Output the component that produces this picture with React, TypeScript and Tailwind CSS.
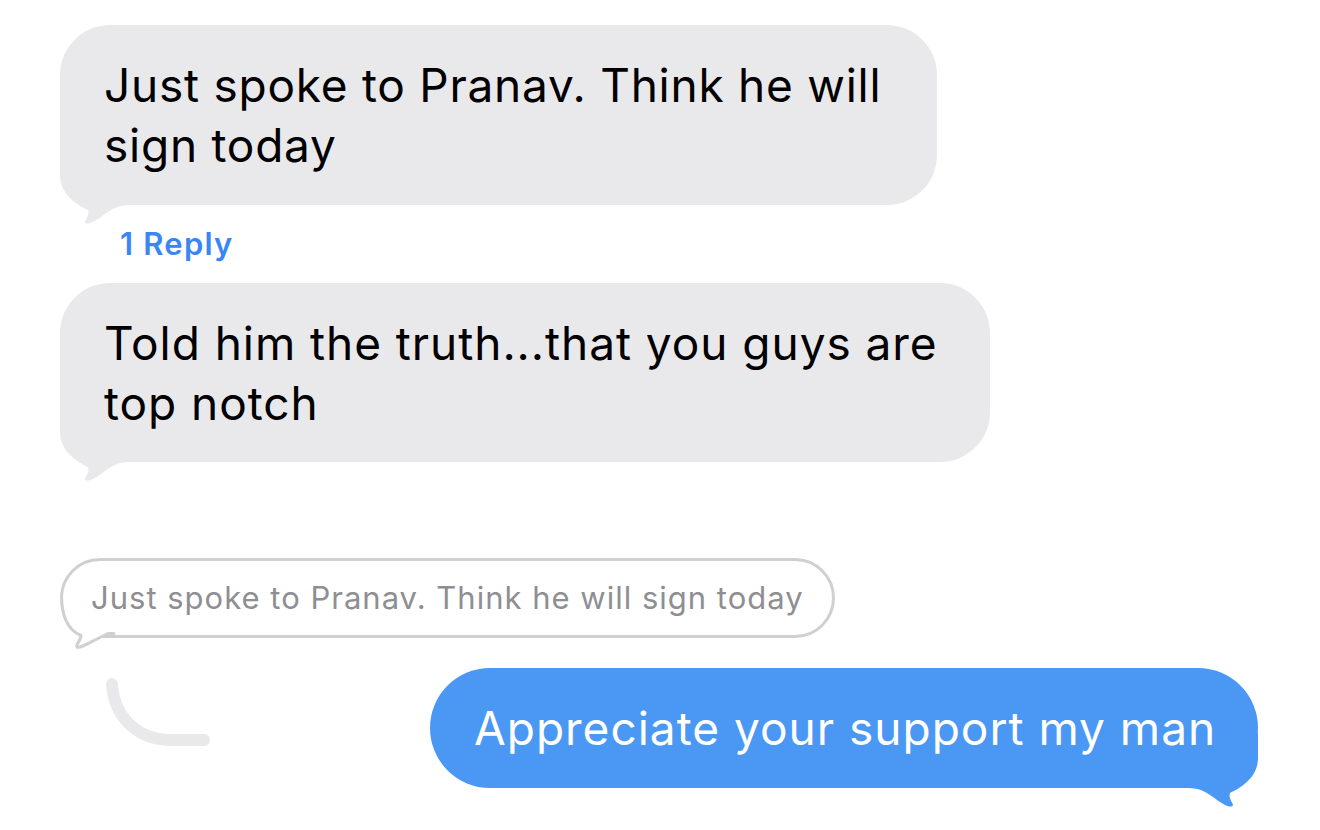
import React from 'react';

const gray = '#e9e9eb';

function GrayTail({ color }: { color: string }) {
  return (
    <svg width="70" height="80" viewBox="0 0 70 80" className="absolute left-0 bottom-[-25px]">
      <path
        d="M0 0 L0 25 C0 45 18 55 28 60 C30 65 25 70 25 72 C26 76 35 72 45 64 C52 59 58 55 70 55 L70 0 Z"
        fill={color}
      />
    </svg>
  );
}

function BlueTail({ color }: { color: string }) {
  return (
    <svg width="70" height="80" viewBox="0 0 70 80" className="absolute right-0 bottom-[-25px] -scale-x-100">
      <path
        d="M0 0 L0 25 C0 45 18 55 28 60 C30 65 25 70 25 72 C26 76 35 72 45 64 C52 59 58 55 70 55 L70 0 Z"
        fill={color}
      />
    </svg>
  );
}

function QuotedTail() {
  return (
    <svg width="60" height="60" viewBox="0 0 60 60" className="absolute left-[-3px] bottom-[-20px] overflow-visible">
      <path d="M0 0 C0 25 10 36 22 40.5 C22 46 16 50 18 52 C21 54 32 46 48 37 L60 37 L60 0 Z" fill="#fff" />
      <path
        d="M1.5 0 C1.5 25 10 36 21 40.5 C21 46 15 50 17 52 C20 54 32 46 48 38.5 L54 38.5"
        fill="none"
        stroke="#d0d0d0"
        strokeWidth="3"
        strokeLinejoin="round"
        strokeLinecap="round"
      />
    </svg>
  );
}

export default function App() {
  return (
    <div className="min-h-screen bg-white pt-[25px] font-['Inter','Liberation_Sans',sans-serif] antialiased">
      <div className="pl-[60px] flex flex-col items-start">
        <div className="relative">
          <GrayTail color={gray} />
          <div className="relative w-[877px] h-[180px] rounded-[50px] bg-[#e9e9eb] px-[44px] flex flex-col justify-center text-[46px] leading-[60px] tracking-[0.75px] text-black">
            <p>Just spoke to Pranav. Think he will<br />sign today</p>
          </div>
        </div>

        <p className="ml-[60px] mt-[21px] text-[31px] leading-[36px] font-semibold tracking-[1.2px] text-[#3a86f5]">1 Reply</p>

        <div className="relative mt-[21px]">
          <GrayTail color={gray} />
          <div className="relative w-[930px] h-[179px] rounded-[50px] bg-[#e9e9eb] px-[44px] flex flex-col justify-center text-[46px] leading-[60px] tracking-[0.95px] text-black">
            <p>Told him the truth...that you guys are<br />top notch</p>
          </div>
        </div>

        <div className="relative mt-[96px] w-[775px] h-[80px] rounded-[40px] border-[3px] border-[#d0d0d0] bg-white px-[28px] flex items-center">
          <QuotedTail />
          <span className="relative whitespace-nowrap text-[31px] tracking-[1px] text-[#8e8e93]">
            Just spoke to Pranav. Think he will sign today
          </span>
        </div>
      </div>

      <div className="mt-[30px] flex justify-between items-start">
        <svg width="120" height="70" viewBox="0 0 120 70" className="ml-[100px] mt-[8px]">
          <path d="M12 8 C14 40 36 64 72 64 L104 64" fill="none" stroke={gray} strokeWidth="12" strokeLinecap="round" />
        </svg>
        <div className="relative mr-[62px]">
          <BlueTail color="#4a98f4" />
          <div className="relative w-[828px] h-[120px] rounded-[60px] bg-[#4a98f4] pl-[44px] flex items-center whitespace-nowrap text-[46px] tracking-[1px] text-white">
            Appreciate your support my man
          </div>
        </div>
      </div>
    </div>
  );
}
